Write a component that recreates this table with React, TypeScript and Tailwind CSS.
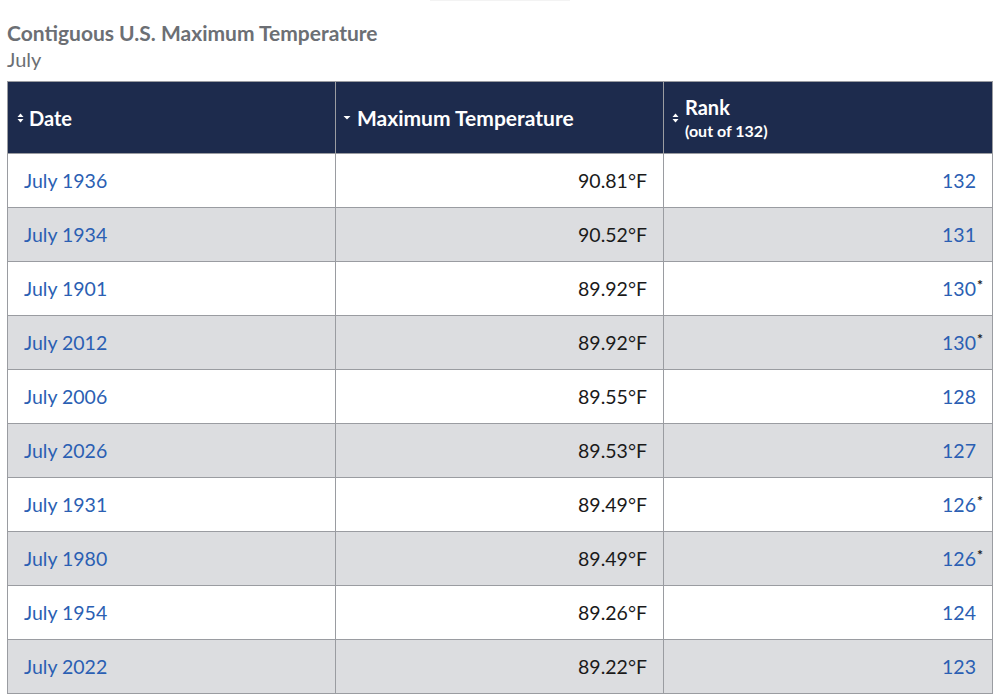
const rows = [
  { date: "July 1936", temp: "90.81°F", rank: "132", tie: false },
  { date: "July 1934", temp: "90.52°F", rank: "131", tie: false },
  { date: "July 1901", temp: "89.92°F", rank: "130", tie: true },
  { date: "July 2012", temp: "89.92°F", rank: "130", tie: true },
  { date: "July 2006", temp: "89.55°F", rank: "128", tie: false },
  { date: "July 2026", temp: "89.53°F", rank: "127", tie: false },
  { date: "July 1931", temp: "89.49°F", rank: "126", tie: true },
  { date: "July 1980", temp: "89.49°F", rank: "126", tie: true },
  { date: "July 1954", temp: "89.26°F", rank: "124", tie: false },
  { date: "July 2022", temp: "89.22°F", rank: "123", tie: false },
];

function SortBoth() {
  return (
    <svg width="7" height="10" viewBox="0 0 7 10" className="inline-block shrink-0">
      <path d="M3.5 0.5 L6.5 4 L0.5 4 Z" fill="#ffffff" />
      <path d="M3.5 9.5 L6.5 6 L0.5 6 Z" fill="#ffffff" />
    </svg>
  );
}

function SortDown() {
  return (
    <svg width="8" height="6" viewBox="0 0 8 6" className="inline-block shrink-0">
      <path d="M0.5 1 L7.5 1 L4 4.5 Z" fill="#ffffff" />
    </svg>
  );
}

export default function App() {
  return (
    <div
      className="w-[1000px] h-[694px] overflow-hidden bg-white"
      style={{ fontFamily: "Lato, 'Liberation Sans', sans-serif" }}
    >
      <div className="mx-auto mt-0 h-px w-[140px] bg-[#f3f3f3]" />
      <div className="px-[7px] pt-[19px]">
        <div className="text-[21px] font-bold leading-[26px] text-[#6c6f74]">
          Contiguous U.S. Maximum Temperature
        </div>
        <div className="text-[20px] leading-[26px] text-[#6c6f74]">July</div>
        <table className="mt-[9px] w-[985px] table-fixed border-collapse">
          <colgroup>
            <col className="w-[328px]" />
            <col className="w-[328px]" />
            <col className="w-[329px]" />
          </colgroup>
          <thead>
            <tr className="h-[72px] bg-[#1d2b4d] text-white">
              <th className="border border-[#9a9ca1] pl-[9px] pr-[8px] text-left align-middle">
                <div className="flex items-center gap-[5px] text-[20px] font-bold">
                  <SortBoth />
                  <span>Date</span>
                </div>
              </th>
              <th className="border border-[#9a9ca1] px-[7px] text-left align-middle">
                <div className="flex items-center gap-[6px] text-[21px] font-bold">
                  <SortDown />
                  <span>Maximum Temperature</span>
                </div>
              </th>
              <th className="border border-[#9a9ca1] px-[8px] text-left align-middle">
                <div className="flex items-center gap-[6px] font-bold">
                  <SortBoth />
                  <div className="flex flex-col">
                    <span className="text-[20px] leading-[25px]">Rank</span>
                    <span className="text-[16px] leading-[21px]">(out of 132)</span>
                  </div>
                </div>
              </th>
            </tr>
          </thead>
          <tbody>
            {rows.map((r, i) => (
              <tr
                key={i}
                className={`h-[54px] text-[19.5px] ${i % 2 === 1 ? "bg-[#dcdde0]" : "bg-white"}`}
              >
                <td className="border border-[#9a9ca1] pl-[16px] pr-[17px] text-[#2b5fb3]">{r.date}</td>
                <td className="border border-[#9a9ca1] px-[16px] text-right text-[#1a1a1a]">
                  {r.temp}
                </td>
                <td className="border border-[#9a9ca1] px-[16px] text-right text-[#2b5fb3]">
                  <span className="relative">
                    {r.rank}
                    {r.tie && (
                      <span className="absolute -right-[7px] -top-[3px] text-[14px] font-bold text-[#1a1a1a]">
                        *
                      </span>
                    )}
                  </span>
                </td>
              </tr>
            ))}
          </tbody>
        </table>
      </div>
    </div>
  );
}
